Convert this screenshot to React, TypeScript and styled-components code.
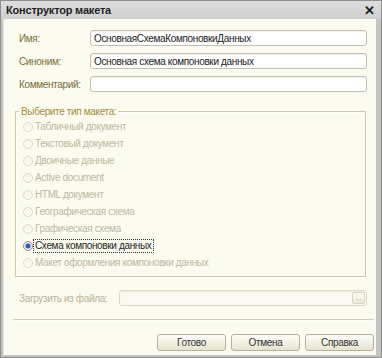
import styled, { createGlobalStyle } from "styled-components";

const GlobalStyle = createGlobalStyle`
    html, body {
        margin: 0;
        padding: 0;
        background: #ffffff;
    }
    * {
        box-sizing: border-box;
    }
`;

const Window = styled.div`
    width: 382px;
    height: 358px;
    display: flex;
    flex-direction: column;
    background: #c4c4c4;
    border: 1px solid #8e8e8e;
    font-family: "Liberation Sans", Arial, sans-serif;
    font-size: 10px;
    letter-spacing: -0.35px;
`;

const TitleBar = styled.div`
    height: 18px;
    flex: none;
    display: flex;
    align-items: center;
    justify-content: space-between;
    padding: 0 6px 0 5px;
    background: linear-gradient(#dedede, #cfcfcf);
    color: #1f1f1f;
    font-size: 11px;
    font-weight: bold;
    letter-spacing: -0.2px;
`;

const Close = styled.span`
    font-size: 13px;
    font-weight: bold;
    color: #202020;
    line-height: 1;
`;

const Content = styled.div`
    flex: 1;
    display: flex;
    flex-direction: column;
    margin: 0 5px 2px 2px;
    padding: 11px 9px 0 11px;
    background: #fcfbf0;
    border-left: 1px solid #e6e4d6;
`;

const Row = styled.div<{ $top?: number; $label?: number }>`
    display: flex;
    align-items: center;
    height: 16px;
    margin-top: ${p => p.$top ?? 7}px;
    padding-left: 4px;

    & > label {
        width: ${p => p.$label ?? 71}px;
        flex: none;
    }
`;

const Label = styled.label<{ $muted?: boolean }>`
    color: ${p => (p.$muted ? "#b9b39a" : "#7d6c36")};
    white-space: nowrap;
`;

const Input = styled.div`
    flex: 1;
    height: 16px;
    display: flex;
    align-items: center;
    padding: 0 3px;
    background: #ffffff;
    border: 1px solid #c2bfae;
    border-radius: 3px;
    box-shadow: inset 0 1px 1px rgba(0, 0, 0, 0.06);
    color: #222;
    white-space: nowrap;
    overflow: hidden;
`;

const FileInput = styled(Input)`
    background: #fbfaf2;
    border-color: #dcd9c8;
    justify-content: flex-end;
    padding: 0 1px 0 0;
`;

const DotsButton = styled.span`
    width: 13px;
    height: 12px;
    display: flex;
    align-items: center;
    justify-content: center;
    border: 1px solid #d6d3c2;
    border-radius: 2px;
    background: linear-gradient(#fbfaf3, #ecead9);
    color: #a8a48f;
    font-size: 8px;
    letter-spacing: -0.5px;
    line-height: 1;
`;

const Group = styled.fieldset`
    margin: 13px 1px 0 0;
    padding: 0 6px 5px 5px;
    border: 1px solid #cdc9b4;
    box-shadow: 1px 1px 0 #ffffff, inset 1px 1px 0 #ffffff;
    min-width: 0;
`;

const Legend = styled.legend`
    padding: 0 2px;
    margin-left: -2px;
    height: 13px;
    line-height: 13px;
    color: #a48c3a;
`;

const RadioRow = styled.div<{ $active?: boolean }>`
    display: flex;
    align-items: center;
    height: 17px;
    margin-left: 2px;
    color: ${p => (p.$active ? "#1e1e1e" : "#bcb8a2")};
`;

const RadioCircle = styled.span<{ $checked?: boolean }>`
    width: 10px;
    height: 10px;
    flex: none;
    margin-right: 1px;
    border-radius: 50%;
    border: 1px solid ${p => (p.$checked ? "#8c8f98" : "#dcd9c9")};
    background: ${p =>
        p.$checked
            ? "radial-gradient(circle, #2c58b0 0 2px, #9ab2df 2.5px, #f4f4f4 3.5px)"
            : "linear-gradient(#f6f5ec, #fdfcf6)"};
`;

const RadioText = styled.span<{ $focused?: boolean }>`
    white-space: nowrap;
    padding: 0 1px;
    line-height: 12px;
    outline: ${p => (p.$focused ? "1px dotted #333" : "none")};
`;

const Separator = styled.div`
    margin: 13px -7px 0 -2px;
    height: 2px;
    border-top: 1px solid #cfccb8;
    border-bottom: 1px solid #ffffff;
`;

const Buttons = styled.div`
    display: flex;
    justify-content: flex-end;
    gap: 5px;
    margin: 13px -7px 0 0;
`;

const Button = styled.button`
    width: 69px;
    height: 17px;
    padding: 0;
    border: 1px solid #b5b19c;
    border-radius: 3px;
    background: linear-gradient(#fefdf8, #f1efe0 60%, #e6e3cf);
    color: #333;
    font-family: inherit;
    font-size: 10px;
    letter-spacing: -0.35px;
`;

const types = [
    "Табличный документ",
    "Текстовый документ",
    "Двоичные данные",
    "Active document",
    "HTML документ",
    "Географическая схема",
    "Графическая схема",
    "Схема компоновки данных",
    "Макет оформления компоновки данных",
];

const selected = "Схема компоновки данных";

export default function App() {
    return (
        <>
            <GlobalStyle />
            <Window>
                <TitleBar>
                    <span>Конструктор макета</span>
                    <Close>✕</Close>
                </TitleBar>
                <Content>
                    <Row $top={0}>
                        <Label>Имя:</Label>
                        <Input>ОсновнаяСхемаКомпоновкиДанных</Input>
                    </Row>
                    <Row>
                        <Label>Синоним:</Label>
                        <Input>Основная схема компоновки данных</Input>
                    </Row>
                    <Row>
                        <Label>Комментарий:</Label>
                        <Input />
                    </Row>

                    <Group>
                        <Legend>Выберите тип макета:</Legend>
                        {types.map(t => (
                            <RadioRow key={t} $active={t === selected}>
                                <RadioCircle $checked={t === selected} />
                                <RadioText $focused={t === selected}>{t}</RadioText>
                            </RadioRow>
                        ))}
                    </Group>

                    <Row $top={13} $label={100}>
                        <Label $muted>Загрузить из файла:</Label>
                        <FileInput>
                            <DotsButton>...</DotsButton>
                        </FileInput>
                    </Row>

                    <Separator />

                    <Buttons>
                        <Button>Готово</Button>
                        <Button>Отмена</Button>
                        <Button>Справка</Button>
                    </Buttons>
                </Content>
            </Window>
        </>
    );
}
